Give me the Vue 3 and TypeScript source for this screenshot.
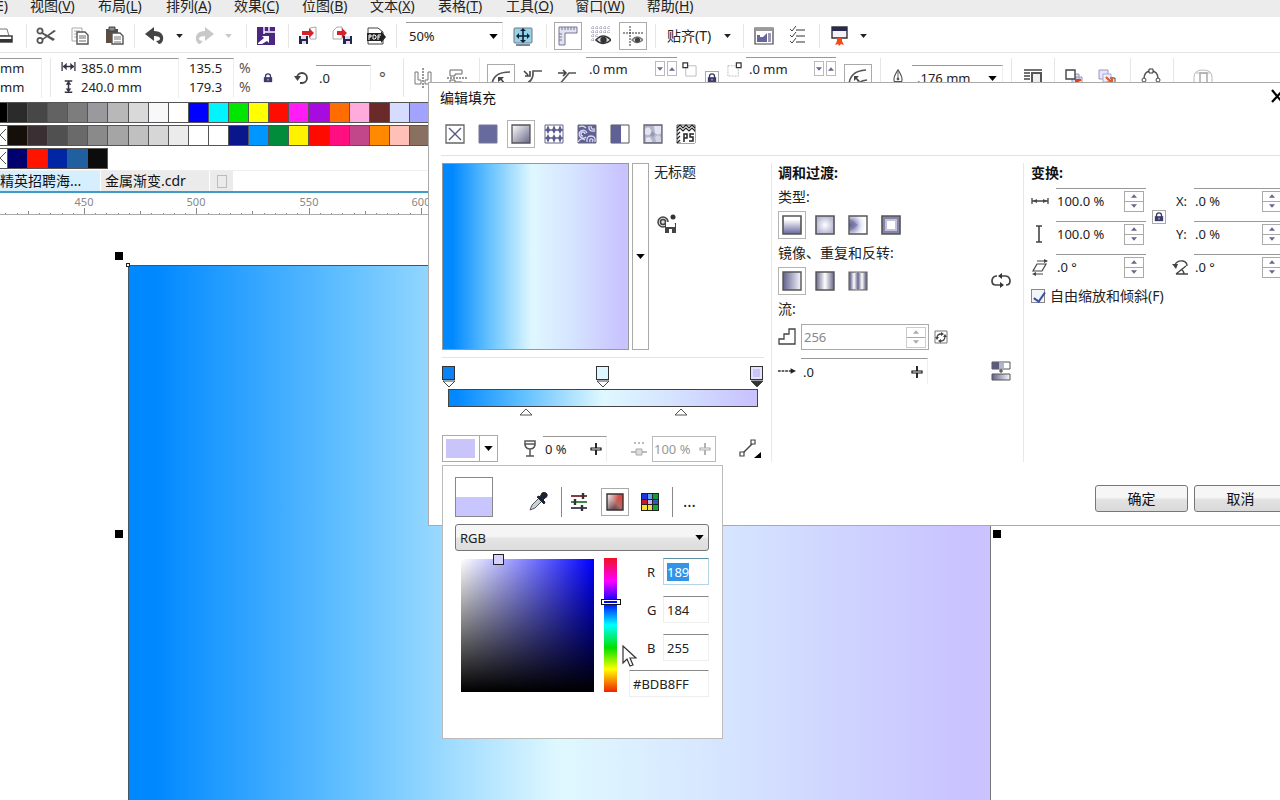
<script setup lang="ts">
import { onMounted, ref } from 'vue'

const menus: [string, string][] = [
  ['视图', 'V'], ['布局', 'L'], ['排列', 'A'], ['效果', 'C'], ['位图', 'B'],
  ['文本', 'X'], ['表格', 'T'], ['工具', 'O'], ['窗口', 'W'], ['帮助', 'H'],
]

const palettes: string[][] = [
  ['#2b2b2b', '#474747', '#626262', '#7d7d7d', '#9a9a9e', '#b8b8b8', '#d9d9d9', '#f8f8fa', '#ffffff', '#0000ff', '#00f6ff', '#00e600', '#ffff00', '#ff0d00', '#ff1cf5', '#a80be0', '#ff6d00', '#ffabdb', '#6b2a2a', '#d5dcff', '#a2a2ff'],
  ['#150f0a', '#3a3033', '#505050', '#6a6a6a', '#8a8a8a', '#a5a5a5', '#c0c0c0', '#d6d6d6', '#ebebeb', '#ffffff', '#ffffff', '#0a168c', '#0096ff', '#008c3a', '#fff200', '#ff0a00', '#ff0f80', '#c2478a', '#ff8a00', '#ffc0b8', '#8a7060'],
  ['#00006e', '#ff1400', '#0026a6', '#2060a0', '#0c0c0c'],
]

const fillTypes: [string, string][] = [
  ['none', '无填充'], ['solid', '均匀填充'], ['fountain', '渐变填充'], ['vector', '向量图样填充'],
  ['bitmap', '位图图样填充'], ['twocolor', '双色图样填充'], ['texture', '底纹填充'], ['ps', 'PostScript 填充'],
]
const activeFill = ref('fountain')

const blendTypes: [string, string][] = [['linear', '线性'], ['radial', '椭圆形'], ['conical', '圆锥形'], ['square', '矩形']]
const repeats: [string, string][] = [['rep1', '默认'], ['rep2', '重复和镜像'], ['rep3', '重复']]
const activeBlend = ref('linear')
const activeRepeat = ref('rep1')

const stops = [
  { color: '#0a84f5', selected: false },
  { color: '#dff5ff', selected: false },
  { color: '#c9c4fa', selected: true },
]

const ticks = Array.from({ length: 112 }, (_, i) => ({
  x: Math.round(84 + (i - 7) * 11.23),
  major: (i - 7) % 10 === 0,
  mid: (i - 7) % 5 === 0,
  label: 450 + (i - 7) * 5,
}))

const space = ref('RGB')
const red = ref('189')
const green = ref('184')
const blue = ref('255')
const hex = ref('#BDB8FF')
const redInput = ref<HTMLInputElement | null>(null)
const freeScale = ref(true)

onMounted(() => {
  redInput.value?.focus()
  redInput.value?.select()
})
</script>

<template>
  <div class="app">
    <svg class="sprite" aria-hidden="true">
      <defs>
        <linearGradient id="gd"><stop offset="0" stop-color="#62628c" /><stop offset="1" stop-color="#f6f6ff" /></linearGradient>
        <linearGradient id="gdiag" x2="1" y2="1"><stop offset="0" stop-color="#ffffff" /><stop offset="1" stop-color="#666688" /></linearGradient>
        <linearGradient id="gv" x2="0" y2="1"><stop offset="0.2" stop-color="#fff" /><stop offset="1" stop-color="#66669c" /></linearGradient>
        <radialGradient id="gr"><stop offset="0" stop-color="#fff" /><stop offset="1" stop-color="#b9b9d6" /></radialGradient>
        <radialGradient id="gc" cx="0.1" cy="0.5" r="0.8"><stop offset="0" stop-color="#56568c" /><stop offset="0.7" stop-color="#e4e4f6" /><stop offset="1" stop-color="#fff" /></radialGradient>
        <linearGradient id="gm"><stop offset="0" stop-color="#66668c" /><stop offset="0.5" stop-color="#fff" /><stop offset="1" stop-color="#66668c" /></linearGradient>
        <linearGradient id="gredx" x1="1" y1="0" x2="0" y2="1"><stop offset="0" stop-color="#ff3828" /><stop offset="0.5" stop-color="#b06868" /><stop offset="1" stop-color="#222" /></linearGradient>
        <linearGradient id="gwhite" x2="1" y2="0.4"><stop offset="0" stop-color="#fff" stop-opacity="0.9" /><stop offset="0.7" stop-color="#fff" stop-opacity="0" /></linearGradient>
      </defs>
      <symbol id="print" viewBox="0 0 20 20"><path d="M4 3h9l2 7H2z" fill="#fff" stroke="#777" /><path d="M1 10h17v6H1z" fill="#fff" stroke="#444" stroke-width="1.600" /><path d="M0 13h18v3H0z" fill="#333" /></symbol>
      <symbol id="cut" viewBox="0 0 20 20"><g fill="none" stroke="#555"><circle cx="4" cy="5" r="2.600" stroke-width="1.800" /><circle cx="4" cy="14.500" r="2.600" stroke-width="1.800" /></g><path d="M6 6l13 7-2 2L6 8zM6 13l12-9 2 1L7 14z" fill="#555" /></symbol>
      <symbol id="copy" viewBox="0 0 20 20"><path d="M2 2h10v13H2z" fill="#fff" stroke="#aaa" /><path d="M4 5h6M4 8h3M4 11h3" stroke="#aaa" /><path d="M7 6h8l3 3v9H7z" fill="#fff" stroke="#555" stroke-width="1.400" /><path d="M9 10h7M9 12h7M9 15h7" stroke="#666" /></symbol>
      <symbol id="paste" viewBox="0 0 20 20"><path d="M2 3h12v14H2z" fill="#5a4e44" /><path d="M5 1h6v4H5z" fill="#888" stroke="#444" /><path d="M8 7h8l3 3v8H8z" fill="#fff" stroke="#555" stroke-width="1.400" /><path d="M10 11h7M10 13h7M10 16h7" stroke="#777" /></symbol>
      <symbol id="undo" viewBox="0 0 20 20"><path d="M0 8L9 1v4c7 0 10 4 9 9-.5 2-2 4-4 4l-3-3c3 0 4-1 4-2.500C15 11 13 10 9 10v5z" fill="currentColor" /></symbol>
      <symbol id="launch" viewBox="0 0 20 20"><path d="M1 1h18v18H1z" fill="#4b2782" /><path d="M2 17l6-5-2-2h7v7l-2-2-5 3H2z" fill="#fff" /><path d="M8 1v7M13 1v4M8 6h11" stroke="#fff" stroke-width="1.400" /></symbol>
      <symbol id="import" viewBox="0 0 20 20"><path d="M12 2l6-1v12h-6z" fill="#fff" stroke="#aaa" /><path d="M4 5h7V2l5 5-5 5V9H4z" fill="#d6202a" /><path d="M1 10h9v8H1z" fill="#26264d" /><path d="M3 10h5v3H3zM4 15h4v3H4z" fill="#dde" /></symbol>
      <symbol id="export" viewBox="0 0 20 20"><path d="M1 5l4-4h5v12H1z" fill="#fff" stroke="#aaa" /><path d="M5 5h5V2l5 5-5 5V9H5z" fill="#d6202a" /><path d="M11 10h9v8h-9z" fill="#26264d" /><path d="M13 10h5v3h-5zM14 15h4v3h-4z" fill="#dde" /></symbol>
      <symbol id="pdf" viewBox="0 0 20 20"><path d="M2 2h10l5 4v12H2z" fill="#fff" stroke="#444" /><path d="M1 7h14V5l5 6-5 6v-2H1z" fill="#222" /><path d="M3 14V9h2v2H3M7 9v4h2l1-1v-2l-1-1zM12 14V9h3M12 11h2" stroke="#fff" fill="none" /></symbol>
      <symbol id="full" viewBox="0 0 20 20"><rect x="1" y="2" width="18" height="15" rx="1" fill="#94d3ee" stroke="#777" /><path d="M3 19h14" stroke="#789" stroke-width="2" /><path d="M10 4v12M4 10h12" stroke="#123" stroke-width="1.600" /><path d="M10 2l3 3H7zM10 17l3-3H7zM3 10l3-3v6zM17 10l-3-3v6z" fill="#123" /></symbol>
      <symbol id="ruler" viewBox="0 0 20 20"><path d="M1 1h18v6H7v12H1z" fill="#e2e2ef" stroke="#77779a" /><path d="M4 1v3M7 1v3M10 1v3M13 1v3M16 1v3M1 8h3M1 11h3M1 14h3" stroke="#77779a" /></symbol>
      <symbol id="gridview" viewBox="0 0 20 20"><path d="M2 0v16M6 0v14M10 0v8M14 0v7M18 0v8M0 2h18M0 6h18M0 10h6M0 14h5" stroke="#8a8aaa" stroke-dasharray="1 1" /><path d="M5 14q7-8 15 0q-8 7-15 0z" fill="#ddd" stroke="#333" stroke-width="1.400" /><circle cx="12.500" cy="14" r="3.200" fill="#333" /></symbol>
      <symbol id="guides" viewBox="0 0 20 20"><path d="M7 0v20M0 7h20" stroke="#333" stroke-dasharray="2 1" /><path d="M9 14q5-6 11 0q-6 5-11 0z" fill="#ddd" stroke="#777" stroke-width="1.300" /><circle cx="14.500" cy="14" r="2.600" fill="#444" /></symbol>
      <symbol id="options" viewBox="0 0 20 20"><path d="M1 2h18v16H1z" fill="#fff" stroke="#444" stroke-width="1.200" /><path d="M1 2h18v3H1z" fill="#999" /><path d="M3 9h3v2h3l4-4v9H3z" fill="#66669c" /><path d="M14 7h3v9h-3z" fill="#9a9ab8" /></symbol>
      <symbol id="list" viewBox="0 0 20 20"><path d="M8 4h9M8 10h9M8 16h9" stroke="#777" stroke-width="1.500" /><path d="M2 3l2 2 4-5M2 9l2 2 4-5M2 15l2 2 4-5" stroke="#444" fill="none" /></symbol>
      <symbol id="screen" viewBox="0 0 20 20"><path d="M3 1h15v11H3z" fill="#f2f2f7" stroke="#333" stroke-width="1.400" /><path d="M3 1h15v4H3z" fill="#282850" /><path d="M8 12h5v3l2 4-3-1-2 2-1-2-3 1 2-4z" fill="#f04c18" /></symbol>
      <symbol id="wide" viewBox="0 0 16 12"><path d="M1 1v10M15 1v10M2 6h12" stroke="#334" stroke-width="1.400" /><path d="M2 6l4-4v8zM14 6l-4-4v8z" fill="#334" /></symbol>
      <symbol id="tall" viewBox="0 0 12 16"><path d="M2 2h8M2 14h8M6 3v10" stroke="#334" stroke-width="1.600" /><path d="M6 2l3 4H3zM6 14l3-4H3z" fill="#334" /></symbol>
      <symbol id="lock" viewBox="0 0 12 12"><path d="M3 6V4q0-3 3-3t3 3v2" fill="none" stroke="#3b3b62" stroke-width="1.600" /><path d="M1 5h10v6H1z" fill="#3b3b6e" /><path d="M6 7v2" stroke="#fff" /></symbol>
      <symbol id="rotate" viewBox="0 0 16 16"><path d="M3 8a5 5 0 1 1 5 5H6" fill="none" stroke="#444" stroke-width="1.800" /><path d="M0 6h7l-3.500 5z" fill="#444" /></symbol>
      <symbol id="mirrorh" viewBox="0 0 20 20"><path d="M10 0v20" stroke="#333" stroke-dasharray="2 1" /><path d="M2 4h3v8h3v4H2zM18 4h-3v8h-3v4h6z" fill="#fff" stroke="#777" /></symbol>
      <symbol id="mirrorv" viewBox="0 0 20 20"><path d="M0 10h20" stroke="#333" stroke-dasharray="2 1" /><path d="M3 2h12v4H8v2H3zM3 18h12v-4H8v-2H3z" fill="#fff" stroke="#666" /></symbol>
      <symbol id="corner1" viewBox="0 0 20 20"><path d="M1 18Q1 4 19 4" fill="none" stroke="#555" stroke-width="1.600" /><path d="M7 9h6l-2 2 3 4-2 1-2-4-3 2z" fill="#444" /></symbol>
      <symbol id="corner2" viewBox="0 0 20 20"><path d="M1 16Q11 14 10 3h9" fill="none" stroke="#555" stroke-width="1.600" /><path d="M1 3l4 4M7 3v5H2" stroke="#444" stroke-width="1.600" fill="none" /></symbol>
      <symbol id="corner3" viewBox="0 0 20 20"><path d="M2 17l10-12h7" fill="none" stroke="#555" stroke-width="1.600" /><path d="M1 5h8M6 2l3 3-3 3" fill="none" stroke="#444" stroke-width="1.600" /></symbol>
      <symbol id="tl" viewBox="0 0 16 16"><path d="M4 4h11v11H4z" fill="none" stroke="#bbb" /><path d="M1 1h5v5H1z" fill="#fff" stroke="#333" stroke-width="1.300" /></symbol>
      <symbol id="tr" viewBox="0 0 16 16"><path d="M1 4h11v11H1z" fill="none" stroke="#bbb" stroke-dasharray="2 1" /><path d="M10 1h5v5h-5z" fill="#fff" stroke="#333" stroke-width="1.300" /></symbol>
      <symbol id="corner4" viewBox="0 0 20 20"><path d="M1 18Q1 3 18 2M9 18q1-5 10-6" fill="none" stroke="#555" stroke-width="1.600" /><path d="M6 8h5l-2 2 3 3-2 1-2-3-2 2z" fill="#444" /></symbol>
      <symbol id="nib" viewBox="0 0 16 20"><path d="M8 1q-6 9-4 13h8q2-4-4-13zM4 16h8" fill="#fff" stroke="#555" stroke-width="1.300" /><path d="M8 3v8" stroke="#555" /><circle cx="8" cy="11" r="1.500" fill="#555" /></symbol>
      <symbol id="wrap" viewBox="0 0 20 20"><path d="M1 2h18M1 5h6M1 8h6M1 11h6" stroke="#444" stroke-width="1.400" /><path d="M9 5h9v11H9z" fill="#eee" stroke="#555" stroke-width="2" /></symbol>
      <symbol id="front" viewBox="0 0 20 20"><path d="M8 6h7v9H8zM12 9h6v9h-6z" fill="#dde" stroke="#99b" /><path d="M2 2h9v9H2z" fill="#fff" stroke="#444" stroke-width="1.400" /><path d="M18 18l-6-6M12 17v-5h5" stroke="#e04018" stroke-width="2" fill="none" /></symbol>
      <symbol id="back" viewBox="0 0 20 20"><path d="M2 2h9v9H2z" fill="#e6e4ff" stroke="#99b" /><path d="M6 6h8v8H6z" fill="#eef" stroke="#aac" /><path d="M13 10h5v9" stroke="#444" fill="none" /><path d="M9 9l6 6M15 9v6H9" stroke="#e85a20" stroke-width="2.400" fill="none" /></symbol>
      <symbol id="nodes" viewBox="0 0 20 20"><path d="M3 11Q3 3 10 3t7 8" fill="none" stroke="#555" stroke-width="1.500" /><path d="M8 1h4v4H8z" fill="#fff" stroke="#333" /><circle cx="3" cy="12" r="2" fill="#fff" stroke="#444" /><circle cx="17" cy="12" r="2" fill="#fff" stroke="#444" /></symbol>
      <symbol id="ghost" viewBox="0 0 20 20"><path d="M1 17V9q0-7 9-7t9 7v8M3 5h14" fill="none" stroke="#bbb" /><path d="M7 5h7v12H7z" fill="none" stroke="#aaa" stroke-width="1.500" /></symbol>

      <symbol id="f-none" viewBox="0 0 20 20"><path d="M1 1h18v18H1z" fill="#fff" stroke="#666" stroke-width="1.300" /><path d="M4 4l12 12M16 4L4 16" stroke="#555580" stroke-width="1.400" /></symbol>
      <symbol id="f-solid" viewBox="0 0 20 20"><path d="M1 1h18v18H1z" fill="#666a9c" stroke="#777799" /></symbol>
      <symbol id="f-fountain" viewBox="0 0 20 20"><path d="M1 1h18v18H1z" fill="url(#gdiag)" stroke="#555" stroke-width="1.300" /></symbol>
      <symbol id="f-vector" viewBox="0 0 20 20"><path d="M1 1h18v18H1z" fill="#fff" stroke="#66668c" /><path d="M1 6h18M1 14h18" stroke="#5c5c90" stroke-width="1.600" /><path d="M4 1l2 5-2 4-2-4zM10 1l2 5-2 4-2-4zM16 1l2 5-2 4-2-4zM4 10l2 4-2 5-2-5zM10 10l2 4-2 5-2-5zM16 10l2 4-2 5-2-5z" fill="#5c5c90" /></symbol>
      <symbol id="f-bitmap" viewBox="0 0 20 20"><path d="M1 1h18v18H1z" fill="#5e6096" stroke="#667" /><path d="M10 9a4 4 0 1 0-1 4M8 10a2 2 0 1 0-2 2M12 2q-1 6 6 5M14 2q0 4 4 3M1 18q3-5 7-2M10 18q-1-6 4-6 5 0 4 6M13 18q-1-4 2-3 2 1 0 3M2 3q4-2 7 1" fill="none" stroke="#dcdcf4" stroke-width="1.300" /></symbol>
      <symbol id="f-twocolor" viewBox="0 0 20 20"><path d="M1 1h18v18H1z" fill="#fff" stroke="#555" /><path d="M1 1h10v18H1z" fill="#5e6096" /></symbol>
      <symbol id="f-texture" viewBox="0 0 20 20"><path d="M1 1h18v18H1z" fill="#b4b4cc" stroke="#667" stroke-width="1.300" /><path d="M2 5q4-4 6 1t-4 5l-2-1zM11 2h7v7q-3 3-6 0zM3 14q5-3 6 4H3z" fill="#e4e4f0" /><path d="M12 13q4-4 6 1v4h-5z" fill="#d4d4e4" /><path d="M9 7l3 3-2 3-3-2z" fill="#9898b6" /></symbol>
      <symbol id="f-ps" viewBox="0 0 20 20"><path d="M1 1h18v18H1z" fill="#fff" stroke="#555" /><path d="M1 4l3-3 3 3 3-3 3 3 3-3 3 3M1 7l3-3 3 3 3-3 3 3 3-3 3 3M1 11l3-3M1 15l3-3M1 19l3-3" fill="none" stroke="#222" stroke-width="1.200" /><path d="M5 8h14v11H5z" fill="#fff" /><path d="M8 18v-8h3v4H8M18 10h-4v3h3v4h-4" fill="none" stroke="#222" stroke-width="1.500" /></symbol>

      <symbol id="b-linear" viewBox="0 0 20 20"><path d="M1 1h18v18H1z" fill="url(#gv)" stroke="#555" stroke-width="1.600" /></symbol>
      <symbol id="b-radial" viewBox="0 0 20 20"><path d="M1 1h18v18H1z" fill="url(#gr)" stroke="#555" stroke-width="1.600" /></symbol>
      <symbol id="b-conical" viewBox="0 0 20 20"><path d="M1 1h18v18H1z" fill="url(#gc)" stroke="#555" stroke-width="1.400" /><path d="M2 4l8 6-8 6z" fill="#7474a0" opacity=".6" /></symbol>
      <symbol id="b-square" viewBox="0 0 20 20"><path d="M1 1h18v18H1z" fill="#8484aa" stroke="#555" stroke-width="1.600" /><path d="M4 4h12v12H4z" fill="#c2c2da" /><path d="M6 6h8v8H6z" fill="#fff" /></symbol>
      <symbol id="b-rep1" viewBox="0 0 20 20"><path d="M1 1h18v18H1z" fill="url(#gd)" stroke="#555" stroke-width="1.400" /></symbol>
      <symbol id="b-rep2" viewBox="0 0 20 20"><path d="M1 1h18v18H1z" fill="url(#gm)" stroke="#555" stroke-width="1.400" /></symbol>
      <symbol id="b-rep3" viewBox="0 0 20 20"><path d="M1 1h9v18H1zM10 1h9v18h-9z" fill="url(#gm)" stroke="#666" stroke-width="1.200" /><path d="M2 2h8v16H2z" fill="url(#gm)" /><path d="M10 2h8v16h-8z" fill="url(#gm)" /></symbol>

      <symbol id="savefill" viewBox="0 0 20 20"><circle cx="6" cy="8" r="5" fill="#ddd" stroke="#444" stroke-width="1.500" /><circle cx="6" cy="8" r="2.500" fill="none" stroke="#444" stroke-width="1.500" /><circle cx="16" cy="3" r="2.500" fill="#333" /><path d="M8 9h11v10H8z" fill="#444" /><path d="M9 8h8l1 2v3H9zM12 15h3v4h-3z" fill="#fff" /></symbol>
      <symbol id="reverse" viewBox="0 0 20 20"><path d="M6 5H5q-4 1-4 5t4 4h6M9 5h6q4 1 4 5t-4 4" fill="none" stroke="#444" stroke-width="1.700" /><path d="M7 5l4-3v6zM13 14l-4-3v6z" fill="#333" /></symbol>
      <symbol id="steps" viewBox="0 0 18 18"><path d="M1 16v-5h5V6h5V1h6v15z" fill="#fff" stroke="#444" stroke-width="1.300" /></symbol>
      <symbol id="cycle" viewBox="0 0 14 14"><path d="M1 1h12v12H1z" fill="#fff" stroke="#777" /><path d="M3 8q0-4 4-4M11 6q0 5-4 5" fill="none" stroke="#444" stroke-width="1.300" /><path d="M7 2l3 2-3 2zM7 9v4l-3-2zM1 7h4l-2 3zM9 7h4l-2-3z" fill="#444" /></symbol>
      <symbol id="arrowdash" viewBox="0 0 20 10"><path d="M0 5h15" stroke="#333" stroke-width="1.500" stroke-dasharray="3 1" /><path d="M14 2l6 3-6 3z" fill="#222" /></symbol>
      <symbol id="smooth" viewBox="0 0 20 20"><path d="M1 1h18v7H1z" fill="#fff" stroke="#555" /><path d="M1 1h7v7H1z" fill="#5c5c78" /><path d="M8 2h5v5H8z" fill="#b4b4cc" /><path d="M10 8v4M8 10h4" stroke="#333" /><path d="M1 13h18v6H1z" fill="url(#gd)" stroke="#555" /></symbol>
      <symbol id="slide" viewBox="0 0 12 14"><path d="M6 1v12" stroke="currentColor" stroke-width="1.800" /><path d="M1 6h10v2H1z" fill="#fff" stroke="currentColor" stroke-width="1.200" /></symbol>
      <symbol id="scalex" viewBox="0 0 18 10"><path d="M1 2v6M17 2v6M1 5h16" stroke="#444" stroke-width="1.300" /><path d="M2 5l4-2v4zM16 5l-4-2v4z" fill="#444" /></symbol>
      <symbol id="scaley" viewBox="0 0 10 18"><path d="M2 1h6M2 17h6M5 1v16" stroke="#444" stroke-width="1.600" /></symbol>
      <symbol id="skew" viewBox="0 0 18 18"><path d="M6 6h9l-4 7H2zM6 3h10M3 16h9" fill="none" stroke="#444" stroke-width="1.200" /><path d="M13 1l4 2-4 2zM5 14v4l-4-2z" fill="#444" /></symbol>
      <symbol id="angle" viewBox="0 0 18 18"><path d="M3 7q2-5 8-4 4 1 4 5M4 16h12M4 16L14 8M9 11q3 2 3 5" fill="none" stroke="#444" stroke-width="1.400" /><path d="M0 6h6l-2 5z" fill="#444" /></symbol>
      <symbol id="glass" viewBox="0 0 14 18"><path d="M2 1h10q1 8-5 8T2 1zM7 9v7M3 16h8M2 4h10" fill="none" stroke="#555" stroke-width="1.500" /></symbol>
      <symbol id="midpt" viewBox="0 0 16 16"><path d="M3 2h10" stroke="#bbb" stroke-width="2" stroke-dasharray="2 2" /><path d="M0 11h16" stroke="#bbb" stroke-width="2" /><path d="M5 8h6v6H5z" fill="#ddd" stroke="#aaa" /></symbol>
      <symbol id="blendline" viewBox="0 0 22 20"><path d="M3 15L14 4" stroke="#444" stroke-width="1.400" /><path d="M1 13h4v4H1zM12 1h4v4h-4z" fill="#fff" stroke="#444" stroke-width="1.200" /><path d="M22 13v6h-7z" fill="#000" /></symbol>
      <symbol id="dropper" viewBox="0 0 20 20"><path d="M2 18l2-5 8-8 3 3-8 8z" fill="#c4d4d2" stroke="#556" /><path d="M9 5l2-1 6 6-1 2zM12 5l2-4q3-2 5 1 1 3-2 4l-2 2z" fill="#1b2230" stroke="#1b2230" /></symbol>
      <symbol id="sliders" viewBox="0 0 20 20"><path d="M2 4h16" stroke="#843c46" stroke-width="2" /><path d="M2 10h16" stroke="#3d8a4c" stroke-width="2" /><path d="M2 16h16" stroke="#4a4a66" stroke-width="2" /><path d="M14 1v6M6 7v6M13 13v6" stroke="#333" stroke-width="2.400" /></symbol>
      <symbol id="viewer" viewBox="0 0 20 20"><path d="M2 2h16v16H2z" fill="url(#gredx)" /><path d="M2 2h16v16H2z" fill="url(#gwhite)" /><path d="M2 2h16v16H2z" fill="none" stroke="#333" stroke-width="1.400" /></symbol>
      <symbol id="swatches" viewBox="0 0 20 20"><path d="M1 1h18v18H1z" fill="#222" /><path d="M2 2h5v5H2z" fill="#1c35d8" /><path d="M8 2h4v5H8z" fill="#5fa2ee" /><path d="M13 2h5v5h-5z" fill="#0c9c3c" /><path d="M2 8h5v4H2z" fill="#c81830" /><path d="M8 8h4v4H8z" fill="#c4b4ea" /><path d="M13 8h5v4h-5z" fill="#2c58c0" /><path d="M2 13h5v5H2z" fill="#ffde2c" /><path d="M8 13h4v5H8z" fill="#e8e04c" /><path d="M13 13h5v5h-5z" fill="#18a838" /></symbol>
      <symbol id="down" viewBox="0 0 10 6"><path d="M0 0h10L5 6z" fill="currentColor" /></symbol>
    </svg>

    <nav class="menubar">
      <a class="menu first" href="#">(E)</a>
      <a v-for="m in menus" :key="m[1]" class="menu" href="#">{{ m[0] }}(<u>{{ m[1] }}</u>)</a>
    </nav>

    <div class="toolbar">
      <div class="group g-print"><button class="tool" aria-label="打印"><svg><use href="#print" /></svg></button></div>
      <div class="group g-edit">
        <button class="tool" aria-label="剪切"><svg><use href="#cut" /></svg></button>
        <button class="tool" aria-label="复制"><svg><use href="#copy" /></svg></button>
        <button class="tool" aria-label="粘贴"><svg><use href="#paste" /></svg></button>
      </div>
      <div class="group g-history">
        <button class="tool dark" aria-label="撤消"><svg><use href="#undo" /></svg></button>
        <button class="drop" aria-label="撤消列表"><svg><use href="#down" /></svg></button>
        <button class="tool faded flip" aria-label="重做"><svg><use href="#undo" /></svg></button>
        <button class="drop faded" aria-label="重做列表"><svg><use href="#down" /></svg></button>
      </div>
      <div class="group g-launch"><button class="tool" aria-label="启动器"><svg><use href="#launch" /></svg></button></div>
      <div class="group g-edit">
        <button class="tool" aria-label="导入"><svg><use href="#import" /></svg></button>
        <button class="tool" aria-label="导出"><svg><use href="#export" /></svg></button>
        <button class="tool" aria-label="发布为 PDF"><svg><use href="#pdf" /></svg></button>
      </div>
      <div class="group g-zoom">
        <label class="combo zoom"><input value="50%" aria-label="缩放级别" /><svg class="caret"><use href="#down" /></svg></label>
        <button class="tool" aria-label="全屏预览"><svg><use href="#full" /></svg></button>
      </div>
      <div class="group g-view">
        <button class="tool boxed" aria-label="标尺"><svg><use href="#ruler" /></svg></button>
        <button class="tool" aria-label="网格"><svg><use href="#gridview" /></svg></button>
        <button class="tool boxed" aria-label="辅助线"><svg><use href="#guides" /></svg></button>
      </div>
      <div class="group g-snap"><button class="snap">贴齐(T)</button><button class="drop" aria-label="贴齐选项"><svg><use href="#down" /></svg></button></div>
      <div class="group g-opts">
        <button class="tool" aria-label="欢迎屏幕"><svg><use href="#options" /></svg></button>
        <button class="tool" aria-label="选项"><svg><use href="#list" /></svg></button>
      </div>
      <div class="group g-app"><button class="tool" aria-label="应用程序启动器"><svg><use href="#screen" /></svg></button><button class="drop" aria-label="应用程序"><svg><use href="#down" /></svg></button></div>
    </div>

    <div class="props">
      <div class="cell c-pos"><div class="pair"><span>mm</span><span>mm</span></div></div>
      <div class="cell c-size">
        <div class="pair icons"><svg class="wide"><use href="#wide" /></svg><svg class="tall"><use href="#tall" /></svg></div>
        <div class="pair boxedpair size"><input value="385.0 mm" aria-label="宽度" /><input value="240.0 mm" aria-label="高度" /></div>
        <div class="pair boxedpair pct"><input value="135.5" aria-label="水平缩放" /><input value="179.3" aria-label="垂直缩放" /></div>
        <div class="pair unit"><span>%</span><span>%</span></div>
        <button class="lock" aria-label="锁定比率"><svg><use href="#lock" /></svg></button>
        <svg class="rot"><use href="#rotate" /></svg>
        <input class="rotin" value=".0" aria-label="旋转角度" /><span class="deg">°</span>
      </div>
      <div class="cell c-mirror"><button class="tool" aria-label="水平镜像"><svg><use href="#mirrorh" /></svg></button><button class="tool" aria-label="垂直镜像"><svg><use href="#mirrorv" /></svg></button></div>
      <div class="cell c-corner">
        <button class="tool boxed" aria-label="圆角"><svg><use href="#corner1" /></svg></button>
        <button class="tool" aria-label="扇形角"><svg><use href="#corner2" /></svg></button>
        <button class="tool" aria-label="倒棱角"><svg><use href="#corner3" /></svg></button>
        <div class="radius"><input value=".0 mm" aria-label="左上角半径" /><i class="sp"><svg><use href="#down" /></svg></i><i class="sp up"><svg><use href="#down" /></svg></i></div>
        <svg class="rc"><use href="#tl" /></svg>
        <button class="lock framed" aria-label="同时编辑所有角"><svg><use href="#lock" /></svg></button>
        <svg class="rc"><use href="#tr" /></svg>
        <div class="radius"><input value=".0 mm" aria-label="右上角半径" /><i class="sp"><svg><use href="#down" /></svg></i><i class="sp up"><svg><use href="#down" /></svg></i></div>
        <button class="tool boxed" aria-label="相对角缩放"><svg><use href="#corner4" /></svg></button>
      </div>
      <div class="cell c-pen"><svg class="nib"><use href="#nib" /></svg><label class="combo pen"><input value=".176 mm" aria-label="轮廓宽度" /><svg class="caret"><use href="#down" /></svg></label></div>
      <div class="cell c-one"><button class="tool" aria-label="文本换行"><svg><use href="#wrap" /></svg></button></div>
      <div class="cell c-order"><button class="tool" aria-label="到图层前面"><svg><use href="#front" /></svg></button><button class="tool" aria-label="到图层后面"><svg><use href="#back" /></svg></button></div>
      <div class="cell c-one"><button class="tool" aria-label="转换为曲线"><svg><use href="#nodes" /></svg></button></div>
      <div class="cell c-last"><button class="tool" aria-label="快速自定义"><svg><use href="#ghost" /></svg></button></div>
    </div>

    <div class="palettes">
      <div v-for="(row, r) in palettes" :key="r" class="prow">
        <span class="pedge" :class="{ black: r === 0 }"><svg v-if="r > 0" viewBox="0 0 7 18"><path d="M6 3L0 9l6 6" fill="none" stroke="#555" /></svg></span>
        <span v-for="(c, i) in row" :key="i" class="sw" :style="{ background: c }" />
      </div>
    </div>

    <div class="tabs">
      <a class="tab on" href="#">精英招聘海...</a><a class="tab" href="#">金属渐变.cdr</a><button class="newtab" aria-label="新建文档"><span /></button>
    </div>

    <svg class="hruler">
      <template v-for="t in ticks" :key="t.x">
        <line :x1="t.x + 0.5" :x2="t.x + 0.5" :y1="t.major ? 15 : t.mid ? 18 : 20" y2="21" stroke="#888" />
        <text v-if="t.major" :x="t.x" y="13" text-anchor="middle">{{ t.label }}</text>
      </template>
    </svg>

    <main class="canvas">
      <div class="page" />
      <span class="corner" />
      <span class="handle h1" /><span class="handle h2" /><span class="handle h3" />
    </main>

    <section class="dialog" role="dialog" aria-label="编辑填充">
      <header class="dtitle"><span>编辑填充</span><button class="close" aria-label="关闭"><svg viewBox="0 0 14 14"><path d="M1 1l10 12M12 1L1 13" stroke="#000" stroke-width="2.200" /></svg></button></header>
      <div class="fills">
        <button v-for="f in fillTypes" :key="f[0]" class="fill" :class="{ on: activeFill === f[0] }" :aria-label="f[1]" @click="activeFill = f[0]"><svg><use :href="'#f-' + f[0]" /></svg></button>
      </div>

      <div class="body">
        <div class="left">
          <div class="top">
            <div class="preview" />
            <button class="strip" aria-label="填充挑选器"><svg><use href="#down" /></svg></button>
            <div class="info"><span>无标题</span><button class="tool" aria-label="另存为新"><svg><use href="#savefill" /></svg></button></div>
          </div>
          <div class="stops">
            <button v-for="s in stops" :key="s.color" class="stop" :class="{ sel: s.selected }" :aria-label="s.color">
              <span class="chip" :style="{ background: s.color }" />
              <svg viewBox="0 0 14 8"><path d="M1 1h12L7 7z" :fill="s.selected ? '#333' : '#fff'" stroke="#444" /></svg>
            </button>
          </div>
          <div class="bar" />
          <div class="mids"><svg v-for="i in 2" :key="i" viewBox="0 0 14 8"><path d="M1 7h12L7 1z" fill="#fff" stroke="#555" /></svg></div>
          <div class="nodebar">
            <button class="colorbtn" aria-label="节点颜色"><span class="nodecolor" /><span class="nodearrow"><svg><use href="#down" /></svg></span></button>
            <svg class="glass"><use href="#glass" /></svg>
            <label class="num n1"><input value="0 %" aria-label="节点透明度" /><svg class="slide"><use href="#slide" /></svg></label>
            <svg class="midpt"><use href="#midpt" /></svg>
            <label class="num n2"><input value="100 %" aria-label="节点位置" disabled /><svg class="slide"><use href="#slide" /></svg></label>
            <button class="blendbtn" aria-label="调和方向"><svg><use href="#blendline" /></svg></button>
          </div>
        </div>

        <div class="middle">
          <h3>调和过渡:</h3>
          <div class="lab">类型:</div>
          <div class="picks"><button v-for="b in blendTypes" :key="b[0]" class="fill" :class="{ on: activeBlend === b[0] }" :aria-label="b[1]" @click="activeBlend = b[0]"><svg><use :href="'#b-' + b[0]" /></svg></button></div>
          <div class="lab">镜像、重复和反转:</div>
          <div class="picks"><button v-for="b in repeats" :key="b[0]" class="fill" :class="{ on: activeRepeat === b[0] }" :aria-label="b[1]" @click="activeRepeat = b[0]"><svg><use :href="'#b-' + b[0]" /></svg></button><button class="tool far" aria-label="反转填充"><svg><use href="#reverse" /></svg></button></div>
          <div class="lab">流:</div>
          <div class="picks"><svg class="steps"><use href="#steps" /></svg>
            <div class="spin disabled"><input value="256" aria-label="步长" disabled /><span class="sps"><i class="up"><svg><use href="#down" /></svg></i><i><svg><use href="#down" /></svg></i></span></div>
            <button class="cyc" aria-label="默认步长"><svg><use href="#cycle" /></svg></button></div>
          <div class="picks tallrow"><svg class="dash"><use href="#arrowdash" /></svg>
            <label class="num n3"><input value=".0" aria-label="加速" /><svg class="slide"><use href="#slide" /></svg></label>
            <button class="tool far" aria-label="平滑"><svg><use href="#smooth" /></svg></button></div>
        </div>

        <div class="right">
          <h3>变换:</h3>
          <div class="tgrid">
            <svg class="sx"><use href="#scalex" /></svg>
            <div class="spin"><input value="100.0 %" aria-label="填充宽度" /><span class="sps"><i class="up"><svg><use href="#down" /></svg></i><i><svg><use href="#down" /></svg></i></span></div>
            <button class="lock framed tlock" aria-label="锁定纵横比"><svg><use href="#lock" /></svg></button>
            <label for="tx">X:</label>
            <div class="spin"><input id="tx" value=".0 %" /><span class="sps"><i class="up"><svg><use href="#down" /></svg></i><i><svg><use href="#down" /></svg></i></span></div>
            <svg class="sy"><use href="#scaley" /></svg>
            <div class="spin"><input value="100.0 %" aria-label="填充高度" /><span class="sps"><i class="up"><svg><use href="#down" /></svg></i><i><svg><use href="#down" /></svg></i></span></div>
            <label for="ty">Y:</label>
            <div class="spin"><input id="ty" value=".0 %" /><span class="sps"><i class="up"><svg><use href="#down" /></svg></i><i><svg><use href="#down" /></svg></i></span></div>
            <svg class="sk"><use href="#skew" /></svg>
            <div class="spin"><input value=".0 °" aria-label="倾斜" /><span class="sps"><i class="up"><svg><use href="#down" /></svg></i><i><svg><use href="#down" /></svg></i></span></div>
            <span />
            <svg class="sk"><use href="#angle" /></svg>
            <div class="spin"><input value=".0 °" aria-label="旋转" /><span class="sps"><i class="up"><svg><use href="#down" /></svg></i><i><svg><use href="#down" /></svg></i></span></div>
          </div>
          <label class="check"><input v-model="freeScale" type="checkbox" /><span>自由缩放和倾斜(F)</span></label>
        </div>
      </div>

      <footer class="actions"><button>确定</button><button>取消</button></footer>

      <div class="popup">
        <div class="ptop">
          <div class="compare"><span /><span /></div>
          <button class="tool drop1" aria-label="滴管"><svg><use href="#dropper" /></svg></button>
          <div class="modes">
            <button class="tool" aria-label="颜色滑块"><svg><use href="#sliders" /></svg></button>
            <button class="tool boxed" aria-label="颜色查看器"><svg><use href="#viewer" /></svg></button>
            <button class="tool" aria-label="调色板"><svg><use href="#swatches" /></svg></button>
          </div>
          <button class="more">...</button>
        </div>
        <div class="model"><select v-model="space" aria-label="颜色模型"><option>RGB</option><option>CMYK</option></select><svg><use href="#down" /></svg></div>
        <div class="picker">
          <div class="field"><span class="fieldpin" /></div>
          <div class="hue"><span class="huepin" /></div>
          <div class="vals">
            <label>R <input ref="redInput" v-model="red" class="focus" /></label>
            <label>G <input v-model="green" /></label>
            <label>B <input v-model="blue" /></label>
            <input v-model="hex" class="hex" aria-label="十六进制" />
          </div>
        </div>
      </div>
      <svg class="cursor" viewBox="0 0 15 23"><path d="M1 1v17l4-4 3 7 3-1-3-7h6z" fill="#fff" stroke="#333" stroke-width="1.200" /></svg>
    </section>
  </div>
</template>

<style>
body { margin: 0; overflow: hidden; }
</style>

<style scoped>
.app { position: relative; display: flex; flex-direction: column; height: 100vh; overflow: hidden; background: #fff; color: #222; font: 14px/18px "Noto Sans", "Noto Sans CJK SC", sans-serif; }
.app *, .app *::before { box-sizing: border-box; }
.sprite { position: absolute; width: 0; height: 0; }
button, input, select { font: inherit; color: inherit; margin: 0; padding: 0; border: 0; background: none; border-radius: 0; outline: 0; }
input { min-width: 0; font-size: 13px; }
a { color: inherit; text-decoration: none; }
svg { display: block; flex: none; }
h3 { margin: 0; font-size: 14px; line-height: 20px; font-weight: 700; color: #111; }

.menubar { display: flex; gap: 22px; height: 17px; flex: none; background: #ececec; line-height: 11px; }
.menu { flex: none; min-width: 46px; white-space: nowrap; }
.menu.first { min-width: 0; width: 8px; display: flex; justify-content: flex-end; }

.toolbar { display: flex; height: 36px; flex: none; border-bottom: 1px solid #e4e4e4; padding-top: 2px; }
.group { flex: none; display: flex; align-items: center; justify-content: space-between; position: relative; padding: 0 10px; }
.group + .group::before { content: ""; position: absolute; left: 0; top: 5px; bottom: 4px; border-left: 1px solid #e6e6e6; }
.tool { flex: none; display: flex; align-items: center; justify-content: center; width: 20px; height: 20px; }
.tool svg { width: 20px; height: 20px; }
.tool.boxed { width: 28px; height: 28px; border: 1px solid #aaa; background: #fff; }
.dark { color: #444; }
.faded { color: #c8c8c8; }
.flip svg { transform: scaleX(-1); }
.drop { width: 7px; height: 10px; display: flex; align-items: center; }
.drop svg { width: 7px; height: 4px; }
.g-print { width: 26px; padding: 0 12px 0 0; justify-content: flex-end; }
.g-edit { width: 108px; }
.g-history { width: 112px; padding: 0 14px 0 11px; }
.g-launch { width: 42px; }
.g-edit + .g-zoom { width: 150px; padding: 0 13px 0 10px; }
.g-view { width: 109px; padding: 0 8px; }
.g-snap { width: 88px; padding: 0 12px; }
.g-opts { width: 76px; padding: 0 11px; }
.g-app { width: 60px; padding: 0 12px 0 10px; }
.combo { display: flex; align-items: center; justify-content: space-between; border-top: 1px solid #999; border-right: 1px solid #eee; }
.combo input { flex: 1; width: 0; }
.caret { width: 9px; height: 5px; color: #000; }
.zoom { width: 97px; height: 28px; padding: 0 4px 0 3px; }

.props { display: flex; height: 48px; flex: none; padding-top: 1px; }
.cell { display: flex; flex: none; align-items: center; position: relative; }
.cell + .cell::before { content: ""; position: absolute; left: 0; top: 4px; bottom: 4px; border-left: 1px solid #e6e6e6; }
.pair { display: flex; flex-direction: column; height: 40px; font-size: 13px; line-height: 19px; }
.pair input { height: 19px; }
.c-pos { width: 50px; }
.c-pos .pair { width: 42px; border-top: 1px solid #999; border-right: 1px solid #eee; }
.c-size { width: 353px; padding-left: 10px; }
.icons { width: 19px; justify-content: space-around; padding-left: 1px; }
.wide { width: 15px; height: 11px; }
.tall { width: 15px; height: 15px; }
.boxedpair { border-top: 1px solid #999; border-right: 1px solid #eee; padding-left: 2px; }
.size { width: 100px; margin-right: 8px; }
.pct { width: 47px; }
.unit { color: #555; padding-left: 5px; width: 28px; font-size: 14px; }
.lock { flex: none; width: 12px; height: 14px; display: flex; align-items: center; justify-content: center; }
.lock svg { width: 10px; height: 10px; }
.lock.framed { width: 14px; height: 14px; border: 1px solid #aaa; }
.rot { width: 16px; height: 16px; margin: 0 6px 0 20px; }
.rotin { width: 55px; height: 26px; border-top: 1px solid #999; border-right: 1px solid #eee; padding-left: 3px; }
.deg { padding-left: 8px; color: #555; font-size: 16px; }
.c-mirror { width: 76px; gap: 14px; padding-left: 10px; }
.c-corner { width: 401px; padding-left: 8px; }
.c-corner > .boxed { margin-right: 8px; }
.c-corner > .tool:nth-child(2) { margin-right: 14px; }
.radius { display: flex; align-items: center; align-self: flex-start; gap: 2px; width: 91px; height: 22px; margin: 3px 5px 0 9px; border-top: 1px solid #999; padding-left: 3px; }
.radius input { flex: 1; width: 0; }
.sp { display: flex; width: 10px; height: 15px; border: 1px solid #bbb; align-items: center; justify-content: center; color: #66668c; }
.sp svg { width: 6px; height: 4px; }
.sp.up svg, .up svg { transform: rotate(180deg); }
.rc { width: 15px; height: 15px; margin-bottom: 16px; }
.c-corner .lock { margin: 0 8px; }
.c-corner .radius:nth-child(8) { margin-left: 4px; width: 90px; margin-right: 8px; }
.c-pen { width: 131px; padding-left: 10px; }
.nib { width: 16px; height: 18px; margin-right: 6px; }
.pen { width: 91px; height: 26px; padding: 0 5px 0 5px; }
.c-one { width: 43px; padding-left: 12px; }
.c-order { width: 76px; gap: 13px; padding-left: 10px; }
.c-order + .c-one { padding-left: 11px; }
.c-last { padding-left: 20px; }

.palettes { flex: none; display: flex; flex-direction: column; gap: 1px; padding-top: 1px; }
.prow { display: grid; grid-template-columns: 8px repeat(21, 1fr); width: 430px; height: 22px; padding-bottom: 1px; }
.pedge { border: 1px solid #555; border-width: 1px 1px 1px 0; }
.pedge svg { width: 7px; height: 18px; }
.black { background: #000; }
.sw { border: 1px solid #555; border-left-width: 0; }

.tabs { display: flex; flex: none; height: 23px; border-bottom: 2px solid #3f9dc4; border-top: 1px solid #eee; }
.tab { width: 109px; padding: 1px 4px; background: #ebebeb; border-right: 1px solid #fff; white-space: nowrap; color: #111; }
.tab.on { width: 101px; padding-left: 0; background: #d6efff; }
.newtab { width: 23px; background: #ebebeb; display: flex; align-items: center; justify-content: center; }
.newtab span { width: 10px; height: 13px; border: 1px solid #bbb; }
.hruler { width: 100%; height: 22px; border-bottom: 1px solid #aaa; }
.hruler text { font-size: 11px; fill: #888; }

.canvas { position: relative; flex: 1; overflow: hidden; }
.page { position: absolute; left: 128px; top: 50px; width: 863px; bottom: -60px; border: 1px solid #456; border-right-color: #777; background: linear-gradient(90deg, #0088ff 3%, #66c2ff 26%, #dff8ff 50%, #d5e4ff 70%, #c9c4ff 96%); }
.corner { position: absolute; left: 126px; top: 48px; width: 4px; height: 4px; border: 1px solid #222; background: #fff; }
.handle { position: absolute; width: 8px; height: 8px; background: #000; }
.h1 { left: 115px; top: 37px; }
.h2 { left: 115px; top: 315px; }
.h3 { left: 993px; top: 315px; }

.dialog { position: absolute; left: 428px; right: -20px; top: 82px; padding: 0 12px 13px 13px; border: 1px solid #aaa; background: #fff; }
.dtitle { display: flex; justify-content: space-between; height: 37px; padding-top: 6px; margin-left: -2px; color: #111; }
.close { width: 14px; height: 14px; margin-right: 2px; }
.close svg { width: 14px; height: 14px; }
.fills { display: flex; gap: 5px; height: 36px; border-bottom: 1px solid #e2e2e2; margin-left: -1px; }
.fill { flex: none; width: 28px; height: 28px; display: flex; align-items: center; justify-content: center; border: 1px solid transparent; }
.fill.on { border-color: #b4b4b4; }
.fill svg { width: 20px; height: 20px; }
.body { display: grid; grid-template-columns: 330px 252px 1fr; padding-top: 7px; }
.left { display: flex; flex-direction: column; border-right: 1px solid #e8e8e8; padding-right: 7px; height: 299px; }
.top { display: flex; height: 195px; padding-bottom: 7px; border-bottom: 1px solid #e4e4e4; }
.preview { width: 187px; height: 187px; border: 1px solid #999; background: linear-gradient(90deg, #0088ff 5%, #66c2ff 25%, #dff8ff 48%, #d5e4ff 70%, #c9c4ff 96%); }
.strip { width: 17px; margin-left: 3px; border: 1px solid #aaa; height: 187px; display: flex; align-items: center; justify-content: center; }
.strip svg { width: 9px; height: 5px; color: #000; }
.info { display: flex; flex-direction: column; gap: 33px; padding-left: 5px; }
.info .tool { margin-left: 3px; }
.stops { display: flex; justify-content: space-between; padding-top: 8px; }
.stop { display: flex; flex-direction: column; width: 14px; }
.chip { height: 14px; border: 1px solid #333; margin-right: 1px; }
.sel .chip { box-shadow: inset 0 0 0 2px #ffffff80; }
.stop svg, .mids svg { width: 14px; height: 8px; }
.bar { height: 22px; margin: 1px 6px 0; border: 1px solid #444; background: linear-gradient(90deg, #0088ff 2%, #66c2ff 25%, #dff8ff 50%, #d5e4ff 72%, #c9c4ff 97%); }
.mids { display: flex; justify-content: space-around; padding: 1px 6px 0; }
.nodebar { display: flex; align-items: center; height: 27px; margin-top: 19px; }
.colorbtn { display: flex; width: 56px; height: 27px; border: 1px solid #aaa; }
.nodecolor { flex: 1; border: 3px solid #fff; border-right-width: 4px; background: #c9c4fa; }
.nodearrow { width: 18px; border-left: 1px solid #aaa; display: flex; align-items: center; justify-content: center; color: #000; }
.nodearrow svg { width: 9px; height: 5px; }
.glass { width: 14px; height: 18px; margin: 0 6px 0 25px; }
.num { display: flex; align-items: center; justify-content: space-between; height: 26px; border-top: 1px solid #999; border-right: 1px solid #eee; padding: 0 4px 0 2px; }
.num input { flex: 1; width: 0; }
.slide { width: 12px; height: 14px; color: #111; }
.n1 { width: 64px; }
.midpt { width: 16px; height: 16px; margin: 0 5px 0 24px; }
.n2 { width: 64px; border: 1px solid #bbb; color: #999; padding-left: 1px; }
.n2 .slide { color: #aaa; }
.blendbtn { margin-left: 23px; }
.blendbtn svg { width: 22px; height: 20px; }

.middle { border-right: 1px solid #e8e8e8; padding: 0 12px 0 6px; }
.lab, .picks { height: 28px; line-height: 28px; }
.picks { display: flex; align-items: center; gap: 5px; }
.far { margin-left: auto; }
.tallrow { height: 40px; }
.steps { width: 18px; height: 18px; }
.dash { width: 18px; height: 10px; }
.spin { display: flex; align-items: center; width: 90px; height: 26px; border-top: 1px solid #999; padding: 0 2px 0 1px; }
.spin input { flex: 1; width: 0; }
.sps { display: flex; flex-direction: column; width: 20px; height: 21px; border: 1px solid #aaa; color: #66668c; }
.sps i { flex: 1; display: flex; align-items: center; justify-content: center; }
.sps i + i { border-top: 1px solid #aaa; }
.sps svg { width: 6px; height: 4px; }
.disabled { width: 128px; border: 1px solid #aaa; color: #888; padding-left: 2px; }
.disabled .sps { color: #aaa; border-color: #ccc; }
.cyc svg { width: 14px; height: 14px; }
.n3 { width: 127px; }

.right { padding-left: 7px; }
.tgrid { display: grid; grid-template-columns: 25px 90px 26px 22px 90px; grid-auto-rows: 33px; align-items: center; padding-top: 1px; }
.sx { width: 18px; height: 10px; }
.sy { width: 16px; height: 18px; }
.sk { width: 18px; height: 18px; }
.tgrid > label { padding-left: 4px; font-size: 13px; }
.tlock { grid-row: 1 / 3; grid-column: 3; justify-self: center; }
.check { display: flex; align-items: center; gap: 5px; height: 26px; }
.check input { appearance: none; width: 14px; height: 14px; border: 1px solid #888; background: #f2f4f8; position: relative; }
.check input:checked::after { content: ""; position: absolute; left: 4px; top: 0; width: 5px; height: 10px; border: solid #3a50a0; border-width: 0 2px 2px 0; transform: rotate(35deg); }
.actions { display: flex; justify-content: flex-end; gap: 6px; padding-top: 23px; }
.actions button { width: 93px; height: 27px; border: 1px solid #777; border-radius: 3px; background: linear-gradient(#f6f6f6 45%, #e2e2e2 55%, #dadada); color: #111; }

.popup { position: absolute; left: 13px; top: 382px; width: 281px; padding: 11px 13px 41px 12px; border: 1px solid #bbb; background: #fff; }
.ptop { display: flex; align-items: center; height: 42px; }
.compare { width: 38px; height: 40px; display: flex; flex-direction: column; border: 1px solid #888; align-self: flex-start; }
.compare span { flex: 1; }
.compare span + span { background: #c9c6ff; }
.drop1 { margin: 8px 13px 0 35px; }
.modes { display: flex; align-items: center; justify-content: space-between; width: 112px; height: 30px; margin-top: 8px; padding: 0 12px 0 7px; border: solid #888; border-width: 0 1px; }
.more { margin: 6px 0 0 10px; font-size: 16px; }
.model { position: relative; margin-top: 5px; }
.model select { appearance: none; width: 100%; height: 27px; padding-left: 4px; border: 1px solid #777; border-radius: 3px; background: linear-gradient(#f5f5f5 45%, #e4e4e4 55%, #dcdcdc); font-size: 13px; }
.model svg { position: absolute; right: 5px; top: 11px; width: 9px; height: 5px; color: #000; }
.picker { display: flex; padding: 7px 0 0 6px; }
.field { position: relative; width: 133px; height: 133px; margin-top: 1px; background: linear-gradient(transparent, #000), linear-gradient(90deg, #fff, #00f); }
.fieldpin { position: absolute; left: 32px; top: -5px; width: 11px; height: 11px; border: 1px solid #222; background: #d5d2ff; }
.hue { position: relative; width: 13px; height: 134px; margin-left: 10px; background: linear-gradient(#f01020, #ff00ff 17%, #0000ff 33%, #00ffff 50%, #00e000 67%, #ffff00 83%, #f02000); }
.huepin { position: absolute; left: -3px; right: -4px; top: 41px; height: 6px; border: 1px solid #111; box-shadow: inset 0 0 0 1px #fff; }
.vals { flex: 1; display: flex; flex-direction: column; align-items: flex-end; gap: 11px; font-size: 13px; }
.vals label { display: flex; align-items: center; justify-content: space-between; width: 62px; }
.vals input { height: 27px; width: 46px; padding-left: 3px; border: 1px solid #eee; border-top-color: #888; }
.vals .focus { border-color: #b5d5e5; border-top-color: #6090a8; }
.vals input::selection { background: #3393e8; color: #fff; }
.vals .hex { width: 80px; margin-top: -2px; }
.cursor { position: absolute; left: 193px; top: 562px; width: 15px; height: 23px; }
</style>
